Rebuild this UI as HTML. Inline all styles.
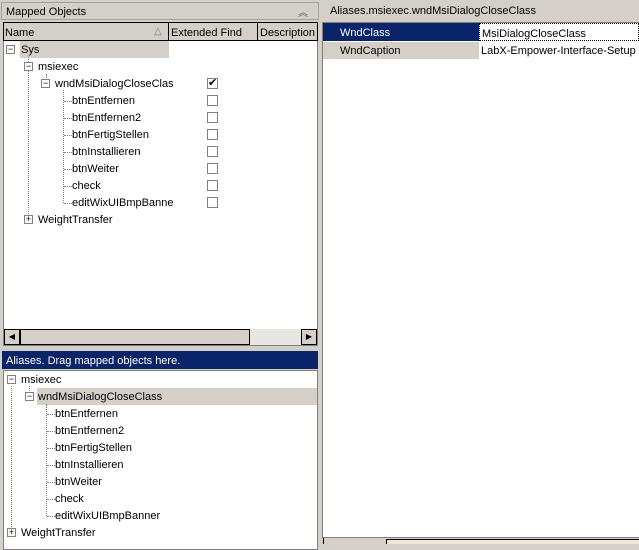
<!DOCTYPE html>
<html><head><style>
*{margin:0;padding:0;box-sizing:border-box}
body{width:639px;height:544px;background:#d4d0c8;font:11px "Liberation Sans",sans-serif;color:#000;position:relative;overflow:hidden}
.a{position:absolute;white-space:nowrap}
.t{position:absolute;height:17px;line-height:19px;white-space:nowrap}
.pm{position:absolute;width:9px;height:9px;border:1px solid #808080;background:#fff;font-size:9px;line-height:7px;text-align:center;color:#000}
.cb{position:absolute;width:11px;height:11px;border:1px solid #808080;background:#fff}
.vl{position:absolute;border-left:1px dotted #808080}
.hl{position:absolute;border-top:1px dotted #808080;width:8px}
</style></head><body>
<div class="a" style="left:1px;top:2px;width:318px;height:18px;border:1px solid #a0a0a0;"></div>
<div class="a" style="left:6px;top:6px">Mapped Objects</div>
<div class="a" style="left:298px;top:4px;font-size:10px;color:#606060">︽</div>
<div class="a" style="left:3px;top:22px;width:315px;height:324px;background:#fff;border:1px solid #808080"></div>
<div class="a" style="left:3px;top:22px;width:315px;height:19px;background:#d4d0c8;border:1px solid #000"></div>
<div class="a" style="left:168px;top:23px;height:17px;border-left:1px solid #000"></div>
<div class="a" style="left:257px;top:23px;height:17px;border-left:1px solid #000"></div>
<div class="a" style="left:5px;top:27px">Name</div>
<div class="a" style="left:154px;top:26px;color:#808080;font-size:10px">△</div>
<div class="a" style="left:171px;top:27px">Extended Find</div>
<div class="a" style="left:260px;top:27px">Description</div>
<div class="a" style="left:20px;top:41px;width:149px;height:17px;background:#d4d0c8"></div>
<div class="pm" style="left:6px;top:45px">−</div><div class="t" style="left:21px;top:41px">Sys</div>
<div class="vl" style="left:28px;top:57px;height:163px"></div>
<div class="pm" style="left:24px;top:62px">−</div><div class="t" style="left:38px;top:58px">msiexec</div>
<div class="vl" style="left:46px;top:74px;height:8px"></div>
<div class="pm" style="left:41px;top:79px">−</div><div class="t" style="left:55px;top:75px">wndMsiDialogCloseClas</div>
<div class="vl" style="left:63px;top:90px;height:113px"></div>
<div class="t" style="left:72px;top:92px">btnEntfernen</div>
<div class="t" style="left:72px;top:109px">btnEntfernen2</div>
<div class="t" style="left:72px;top:126px">btnFertigStellen</div>
<div class="t" style="left:72px;top:143px">btnInstallieren</div>
<div class="t" style="left:72px;top:160px">btnWeiter</div>
<div class="t" style="left:72px;top:177px">check</div>
<div class="t" style="left:72px;top:194px">editWixUIBmpBanne</div>
<div class="hl" style="left:64px;top:101px"></div><div class="hl" style="left:64px;top:118px"></div><div class="hl" style="left:64px;top:135px"></div><div class="hl" style="left:64px;top:152px"></div><div class="hl" style="left:64px;top:169px"></div><div class="hl" style="left:64px;top:186px"></div><div class="hl" style="left:64px;top:203px"></div>
<div class="pm" style="left:24px;top:215px">+</div><div class="t" style="left:38px;top:211px">WeightTransfer</div>
<div class="cb" style="left:207px;top:78px;font-size:11px;line-height:9px;text-align:center">✔</div>
<div class="cb" style="left:207px;top:95px"></div><div class="cb" style="left:207px;top:112px"></div><div class="cb" style="left:207px;top:129px"></div><div class="cb" style="left:207px;top:146px"></div><div class="cb" style="left:207px;top:163px"></div><div class="cb" style="left:207px;top:180px"></div><div class="cb" style="left:207px;top:197px"></div>
<div class="a" style="left:4px;top:329px;width:313px;height:16px;background:#e8e6e0"></div>
<div class="a" style="left:4px;top:329px;width:16px;height:16px;border:1px solid #000;background:#d4d0c8;font-size:8px;text-align:center;line-height:14px">◀</div>
<div class="a" style="left:20px;top:329px;width:230px;height:16px;border:1px solid #000;background:#d4d0c8"></div>
<div class="a" style="left:301px;top:329px;width:16px;height:16px;border:1px solid #000;background:#d4d0c8;font-size:8px;text-align:center;line-height:14px">▶</div>
<div class="a" style="left:2px;top:351px;width:316px;height:18px;background:#0a246a;color:#fff;padding:4px 4px">Aliases. Drag mapped objects here.</div>
<div class="a" style="left:3px;top:370px;width:315px;height:180px;background:#fff;border:1px solid #808080"></div>
<div class="a" style="left:37px;top:388px;width:280px;height:17px;background:#d4d0c8"></div>
<div class="vl" style="left:11px;top:386px;height:147px"></div>
<div class="pm" style="left:7px;top:375px">−</div><div class="t" style="left:21px;top:371px">msiexec</div>
<div class="vl" style="left:29px;top:386px;height:7px"></div>
<div class="pm" style="left:25px;top:392px">−</div><div class="t" style="left:38px;top:388px">wndMsiDialogCloseClass</div>
<div class="vl" style="left:46px;top:404px;height:112px"></div>
<div class="t" style="left:55px;top:405px">btnEntfernen</div>
<div class="t" style="left:55px;top:422px">btnEntfernen2</div>
<div class="t" style="left:55px;top:439px">btnFertigStellen</div>
<div class="t" style="left:55px;top:456px">btnInstallieren</div>
<div class="t" style="left:55px;top:473px">btnWeiter</div>
<div class="t" style="left:55px;top:490px">check</div>
<div class="t" style="left:55px;top:507px">editWixUIBmpBanner</div>
<div class="hl" style="left:47px;top:414px"></div><div class="hl" style="left:47px;top:431px"></div><div class="hl" style="left:47px;top:448px"></div><div class="hl" style="left:47px;top:465px"></div><div class="hl" style="left:47px;top:482px"></div><div class="hl" style="left:47px;top:499px"></div><div class="hl" style="left:47px;top:516px"></div>
<div class="pm" style="left:7px;top:528px">+</div><div class="t" style="left:21px;top:524px">WeightTransfer</div>
<div class="a" style="left:330px;top:5px">Aliases.msiexec.wndMsiDialogCloseClass</div>
<div class="a" style="left:322px;top:22px;width:317px;height:516px;background:#fff;border-left:1px solid #808080;border-top:1px solid #808080;border-bottom:1px solid #808080"></div>
<div class="a" style="left:323px;top:23px;width:156px;height:18px;background:#0a246a;color:#fff;padding:4px 0 0 17px">WndClass</div>
<div class="a" style="left:479px;top:23px;width:160px;height:18px;padding:4px 0 0 2px;border:1px dotted #000">MsiDialogCloseClass</div>
<div class="a" style="left:323px;top:42px;width:156px;height:17px;background:#d4d0c8;padding:3px 0 0 17px">WndCaption</div>
<div class="a" style="left:479px;top:42px;padding:3px 0 0 2px;height:17px">LabX-Empower-Interface-Setup</div>
<div class="a" style="left:323px;top:538px;width:3px;height:6px;border-left:1px solid #000"></div>
<div class="a" style="left:386px;top:539px;width:253px;height:5px;background:#ece9d8;border-left:1px solid #000;border-top:1px solid #000"></div>
</body></html>
